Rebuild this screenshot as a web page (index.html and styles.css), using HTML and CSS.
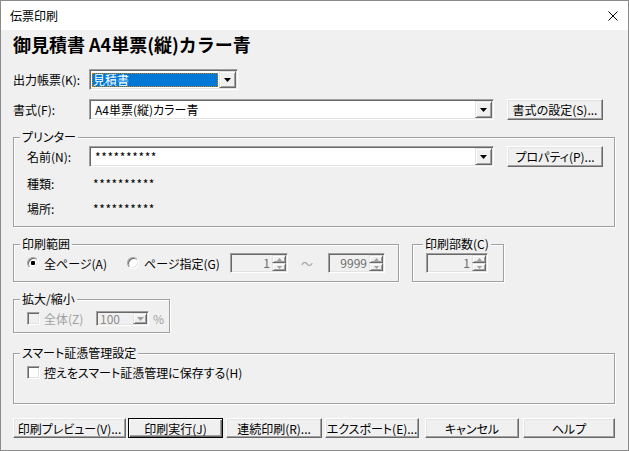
FILE: index.html
```html
<!DOCTYPE html>
<html lang="ja">
<head>
<meta charset="utf-8">
<title>伝票印刷</title>
<link rel="stylesheet" href="styles.css">
</head>
<body>
<div class="window">
  <div class="titlebar">
    <span class="title">伝票印刷</span>
    <svg class="close" width="10" height="10" viewBox="0 0 10 10"><path d="M0.5 0.5L9.5 9.5M9.5 0.5L0.5 9.5" stroke="#000" stroke-width="1" fill="none"/></svg>
  </div>
  <div class="client">
    <h1 class="heading">御見積書 A4単票(縦)カラー青</h1>

    <div class="row row-report">
      <span class="lbl lbl-main">出力帳票(K):</span>
      <div class="combo combo-report">
        <span class="combo-text selected">見積書</span>
        <span class="combo-btn"><svg width="7" height="4" viewBox="0 0 7 4"><path d="M0 0H7L3.5 4Z" fill="#000"/></svg></span>
      </div>
    </div>

    <div class="row row-format">
      <span class="lbl lbl-main">書式(F):</span>
      <div class="combo combo-wide">
        <span class="combo-text">A4単票(縦)カラー青</span>
        <span class="combo-btn"><svg width="7" height="4" viewBox="0 0 7 4"><path d="M0 0H7L3.5 4Z" fill="#000"/></svg></span>
      </div>
      <button class="btn btn-side">書式の設定(S)...</button>
    </div>

    <fieldset class="group group-printer">
      <legend>プリンター</legend>
      <div class="printer-body">
        <div class="row">
          <span class="lbl lbl-sub">名前(N):</span>
          <div class="combo combo-wide">
            <span class="combo-text stars">**********</span>
            <span class="combo-btn"><svg width="7" height="4" viewBox="0 0 7 4"><path d="M0 0H7L3.5 4Z" fill="#000"/></svg></span>
          </div>
          <button class="btn btn-side">プロパティ(P)...</button>
        </div>
        <div class="info info-kind"><span class="lbl lbl-sub">種類:</span><span class="val stars">**********</span></div>
        <div class="info info-place"><span class="lbl lbl-sub">場所:</span><span class="val stars">**********</span></div>
      </div>
    </fieldset>

    <div class="row-groups">
      <fieldset class="group group-range">
        <legend>印刷範囲</legend>
        <div class="range-body">
          <span class="opt opt-all"><span class="radio checked"></span>全ページ(A)</span>
          <span class="opt opt-pages"><span class="radio"></span>ページ指定(G)</span>
          <div class="spin spin-from">
            <span class="spin-val">1</span>
            <span class="spin-btns">
              <span class="spin-b"><svg width="5" height="3" viewBox="0 0 5 3"><path d="M2.5 0L5 3H0Z" fill="#a0a0a0"/></svg></span>
              <span class="spin-b"><svg width="5" height="3" viewBox="0 0 5 3"><path d="M0 0H5L2.5 3Z" fill="#a0a0a0"/></svg></span>
            </span>
          </div>
          <span class="wave">～</span>
          <div class="spin spin-to">
            <span class="spin-val">9999</span>
            <span class="spin-btns">
              <span class="spin-b"><svg width="5" height="3" viewBox="0 0 5 3"><path d="M2.5 0L5 3H0Z" fill="#a0a0a0"/></svg></span>
              <span class="spin-b"><svg width="5" height="3" viewBox="0 0 5 3"><path d="M0 0H5L2.5 3Z" fill="#a0a0a0"/></svg></span>
            </span>
          </div>
        </div>
      </fieldset>
      <fieldset class="group group-copies">
        <legend>印刷部数(C)</legend>
        <div class="copies-body">
          <div class="spin spin-copies">
            <span class="spin-val">1</span>
            <span class="spin-btns">
              <span class="spin-b"><svg width="5" height="3" viewBox="0 0 5 3"><path d="M2.5 0L5 3H0Z" fill="#a0a0a0"/></svg></span>
              <span class="spin-b"><svg width="5" height="3" viewBox="0 0 5 3"><path d="M0 0H5L2.5 3Z" fill="#a0a0a0"/></svg></span>
            </span>
          </div>
        </div>
      </fieldset>
    </div>

    <fieldset class="group group-zoom">
      <legend>拡大/縮小</legend>
      <div class="zoom-body">
        <span class="check disabled"></span>
        <span class="zoom-lbl">全体(Z)</span>
        <div class="combo combo-small">
          <span class="combo-text">100</span>
          <span class="combo-btn"><svg width="7" height="4" viewBox="0 0 7 4"><path d="M0 0H7L3.5 4Z" fill="#a0a0a0"/></svg></span>
        </div>
        <span class="pct">%</span>
      </div>
    </fieldset>

    <fieldset class="group group-smart">
      <legend>スマート証憑管理設定</legend>
      <div class="smart-body">
        <span class="check"></span>
        <span>控えをスマート証憑管理に保存する(H)</span>
      </div>
    </fieldset>

    <div class="buttons">
      <button class="btn bb bb1">印刷プレビュー(V)...</button>
      <button class="btn bb bb2 default">印刷実行(J)</button>
      <button class="btn bb bb3">連続印刷(R)...</button>
      <button class="btn bb bb4">エクスポート(E)...</button>
      <button class="btn bb bb5">キャンセル</button>
      <button class="btn bb bb6">ヘルプ</button>
    </div>
  </div>
</div>
</body>
</html>
```

FILE: styles.css
```css
* { box-sizing: border-box; }
html, body { margin: 0; padding: 0; }
body {
  width: 629px;
  height: 451px;
  overflow: hidden;
  font-family: "Noto Sans CJK JP", "Noto Sans", sans-serif;
  font-size: 12px;
  color: #000;
  font-feature-settings: "palt" 1;
}
.window {
  width: 629px;
  height: 451px;
  border: 1px solid #8a8a8a;
  background: #f0f0f0;
  display: flex;
  flex-direction: column;
}
.titlebar {
  flex: none;
  height: 29px;
  background: #fff;
  display: flex;
  align-items: center;
  justify-content: space-between;
  padding: 0 10px 0 9px;
}
.title { font-size: 12px; line-height: 16px; }
.close { display: block; margin-top: 1px; }

.client {
  flex: 1;
  padding: 0 13px 0 12px;
  display: flex;
  flex-direction: column;
}
.heading {
  margin: 2px 0 0;
  font-size: 18px;
  font-weight: bold;
  line-height: 24px;
  height: 24px;
  font-feature-settings: normal;
}
.row { display: flex; align-items: center; height: 21px; }
.row-report { margin-top: 13px; }
.row-format { margin-top: 9px; }
.lbl { flex: none; white-space: nowrap; }
.lbl-main { width: 76px; }
.lbl-sub { width: 62px; }

.combo {
  flex: none;
  height: 21px;
  display: flex;
  background: #fff;
  border: 1px solid;
  border-color: #a0a0a0 #fff #fff #a0a0a0;
  box-shadow: inset 1px 1px 0 #696969, inset -1px -1px 0 #e3e3e3;
  padding: 1px;
}
.combo-text {
  flex: 1;
  padding-left: 4px;
  line-height: 17px;
  white-space: nowrap;
}
.combo-text.selected {
  margin: 2px 1px 1px 1px;
  padding-left: 1px;
  line-height: 14px;
  background: #0078d7;
  color: #fff;
  outline: 1px dotted #d27a00;
  outline-offset: -1px;
}
.stars { letter-spacing: 0.6px; }
.combo-btn {
  flex: none;
  width: 17px;
  background: #f0f0f0;
  border: 1px solid;
  border-color: #e3e3e3 #696969 #696969 #e3e3e3;
  box-shadow: inset 1px 1px 0 #fff, inset -1px -1px 0 #a0a0a0;
  display: flex;
  align-items: center;
  justify-content: center;
  padding-top: 1px;
}
.combo-btn svg { display: block; }
.combo-report { width: 149px; }
.combo-wide { width: 405px; }

.btn {
  font: inherit;
  font-size: 12px;
  color: #000;
  height: 21px;
  padding: 0;
  background: #f0f0f0;
  border: 1px solid;
  border-color: #fff #696969 #696969 #fff;
  box-shadow: inset -1px -1px 0 #a0a0a0, inset 1px 1px 0 #e3e3e3;
  white-space: nowrap;
}
.btn-side { flex: none; width: 96px; margin-left: 13px; }
.btn.default {
  border: 1px solid #000;
  box-shadow: inset 1px 1px 0 #fff, inset -1px -1px 0 #696969, inset -2px -2px 0 #a0a0a0;
}

.group {
  margin: 0;
  padding: 0;
  min-width: 0;
  border: 1px solid #a0a0a0;
  box-shadow: inset 1px 1px 0 #fff, 1px 1px 0 #fff;
}
.group legend {
  padding: 0 2px;
  margin-left: 6px;
  line-height: 16px;
  background: #f0f0f0;
}
.group-printer { margin-top: 9px; }
.printer-body { padding: 1px 11px 10px 13px; }
.info { display: flex; align-items: center; height: 16px; }
.info-kind { margin-top: 8px; }
.info-place { margin-top: 9px; }
.val { padding-left: 4px; }

.row-groups { display: flex; align-items: flex-start; margin-top: 9px; }
.group-range { width: 386px; flex: none; }
.group-copies { width: 92px; flex: none; margin-left: 13px; }
.group-copies legend { margin-left: 10px; }
.range-body {
  display: flex;
  align-items: center;
  padding: 1px 0 8px 13px;
}
.copies-body { padding: 1px 0 8px 13px; }
.opt { display: flex; align-items: center; flex: none; white-space: nowrap; }
.opt-all { width: 100px; }
.opt-pages { width: 103px; }
.radio {
  width: 12px;
  height: 12px;
  margin-right: 5px;
  border-radius: 50%;
  border: 1px solid;
  border-color: #a0a0a0 #fff #fff #a0a0a0;
  box-shadow: inset 1px 1px 0 #696969, inset -1px -1px 0 #e3e3e3;
  background: #fff;
  flex: none;
}
.radio.checked {
  background: radial-gradient(circle at 50% 50%, #000 0 2px, #fff 2.5px);
}
.spin {
  flex: none;
  display: flex;
  height: 20px;
  background: #f0f0f0;
  border: 1px solid;
  border-color: #a0a0a0 #fff #fff #a0a0a0;
  box-shadow: inset 1px 1px 0 #696969, inset -1px -1px 0 #e3e3e3;
  padding: 1px;
}
.spin-val {
  flex: 1;
  text-align: right;
  color: #6d6d6d;
  padding-right: 2px;
  line-height: 16px;
}
.spin-btns { width: 14px; flex: none; display: flex; flex-direction: column; }
.spin-b {
  flex: 1;
  background: #f0f0f0;
  border: 1px solid;
  border-color: #e3e3e3 #696969 #696969 #e3e3e3;
  box-shadow: inset 1px 1px 0 #fff, inset -1px -1px 0 #a0a0a0;
  display: flex;
  align-items: center;
  justify-content: center;
}
.spin-b svg { display: block; }
.spin-from { width: 58px; }
.spin-to { width: 57px; }
.spin-copies { width: 62px; }
.wave { width: 12px; margin: 0 15px 0 13px; color: #a0a0a0; flex: none; }

.group-zoom { width: 157px; margin-top: 9px; }
.zoom-body {
  display: flex;
  align-items: center;
  height: 25px;
  padding: 3px 0 5px 13px;
}
.check {
  width: 13px;
  height: 13px;
  margin-right: 4px;
  flex: none;
  border: 1px solid;
  border-color: #a0a0a0 #fff #fff #a0a0a0;
  box-shadow: inset 1px 1px 0 #696969, inset -1px -1px 0 #e3e3e3;
  background: #fff;
}
.check.disabled { background: #f0f0f0; }
.zoom-lbl { width: 52px; flex: none; color: #a0a0a0; }
.combo-small { width: 53px; height: 15px; background: #f0f0f0; }
.combo-small .combo-text { color: #8c8c8c; padding-left: 2px; line-height: 11px; }
.combo-small .combo-btn { width: 14px; padding-top: 0; }
.pct { margin-left: 4px; color: #a0a0a0; }

.group-smart { margin-top: 12px; }
.smart-body {
  display: flex;
  align-items: center;
  height: 42px;
  padding: 3px 0 23px 13px;
}

.buttons { display: flex; margin-top: 14px; }
.bb { height: 20px; flex: none; }
.bb1 { width: 113px; }
.bb2 { width: 95px; margin-left: 2px; }
.bb3 { width: 96px; margin-left: 3px; }
.bb4 { width: 94px; margin-left: 3px; }
.bb5 { width: 94px; margin-left: 6px; }
.bb6 { width: 92px; margin-left: 4px; }
```
